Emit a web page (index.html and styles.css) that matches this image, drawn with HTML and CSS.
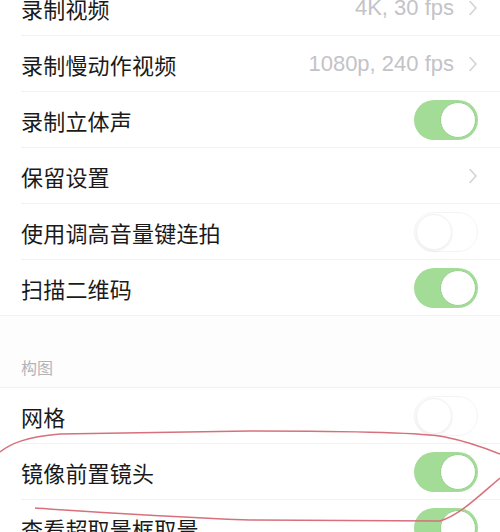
FILE: index.html
```html
<!DOCTYPE html>
<html lang="zh-CN">
<head>
<meta charset="utf-8">
<link rel="stylesheet" href="styles.css">
</head>
<body>
<div class="page">
  <div class="group">
    <div class="row"><span class="label">录制视频</span><span class="value">4K, 30 fps</span><svg class="chev" viewBox="0 0 10 16"><path d="M2 1.5 L8 8 L2 14.5"/></svg></div>
    <div class="row"><span class="label">录制慢动作视频</span><span class="value">1080p, 240 fps</span><svg class="chev" viewBox="0 0 10 16"><path d="M2 1.5 L8 8 L2 14.5"/></svg></div>
    <div class="row"><span class="label">录制立体声</span><span class="switch on"><span class="knob"></span></span></div>
    <div class="row"><span class="label">保留设置</span><svg class="chev" viewBox="0 0 10 16"><path d="M2 1.5 L8 8 L2 14.5"/></svg></div>
    <div class="row"><span class="label">使用调高音量键连拍</span><span class="switch off"><span class="knob"></span></span></div>
    <div class="row last"><span class="label">扫描二维码</span><span class="switch on"><span class="knob"></span></span></div>
  </div>
  <div class="header"><span>构图</span></div>
  <div class="group">
    <div class="row"><span class="label">网格</span><span class="switch off"><span class="knob"></span></span></div>
    <div class="row"><span class="label">镜像前置镜头</span><span class="switch on"><span class="knob"></span></span></div>
    <div class="row"><span class="label">查看超取景框取景</span><span class="switch on"><span class="knob"></span></span></div>
  </div>
  <svg class="mark" viewBox="0 0 500 532" width="500" height="532">
    <path d="M0,452 C10,444 25,437 60,434 L250,431 C350,431 420,432 445,437 C470,442 490,450 500,454"/>
    <path d="M35,508 C80,511 150,516 250,520 L440,521 C460,515 480,495 500,478"/>
  </svg>
</div>
</body>
</html>
```
FILE: styles.css
```css
html, body {
  margin: 0;
  padding: 0;
  background: #ffffff;
}
.page {
  position: relative;
  width: 500px;
  height: 532px;
  overflow: hidden;
  font-family: "Liberation Sans", "Noto Sans CJK SC", sans-serif;
}
.group {
  background: #ffffff;
}
.group:first-child {
  margin-top: -20px;
}
.row {
  height: 56px;
  margin-left: 21px;
  padding-right: 22px;
  display: flex;
  align-items: center;
  border-bottom: 1px solid #f2f2f4;
  box-sizing: border-box;
}
.row.last {
  margin-left: 0;
  padding-left: 21px;
}
.label {
  font-size: 22px;
  color: #1a1a1a;
  flex: 1;
  letter-spacing: 0.2px;
}
.value {
  font-size: 22px;
  color: #c3c3c8;
  margin-right: 14px;
}
.chev {
  width: 10px;
  height: 16px;
  fill: none;
  stroke: #d3d3d7;
  stroke-width: 1.6;
  stroke-linecap: round;
  stroke-linejoin: round;
}
.switch {
  width: 64px;
  height: 40px;
  border-radius: 20px;
  box-sizing: border-box;
  display: flex;
  align-items: center;
  padding: 2px;
}
.switch.on {
  background: #a2dc97;
  justify-content: flex-end;
}
.switch.off {
  background: #ffffff;
  border: 1px solid #f4f4f6;
  justify-content: flex-start;
  padding: 1px;
}
.knob {
  width: 36px;
  height: 36px;
  border-radius: 50%;
  background: #ffffff;
  box-sizing: border-box;
}
.switch.on .knob {
  border: 1.5px solid #98cf8d;
}
.switch.off .knob {
  box-shadow: 0 1px 3px rgba(0,0,0,0.07);
  border: 1px solid #f2f2f4;
}
.header {
  height: 72px;
  background: #fdfdfd;
  border-bottom: 1px solid #f2f2f4;
  box-sizing: border-box;
  padding: 0 21px 8px;
  display: flex;
  align-items: flex-end;
}
.header span {
  font-size: 16px;
  color: #b3b3b8;
}
.mark {
  position: absolute;
  left: 0;
  top: 0;
  fill: none;
  stroke: #d7707b;
  stroke-width: 1.5;
  pointer-events: none;
}
```
